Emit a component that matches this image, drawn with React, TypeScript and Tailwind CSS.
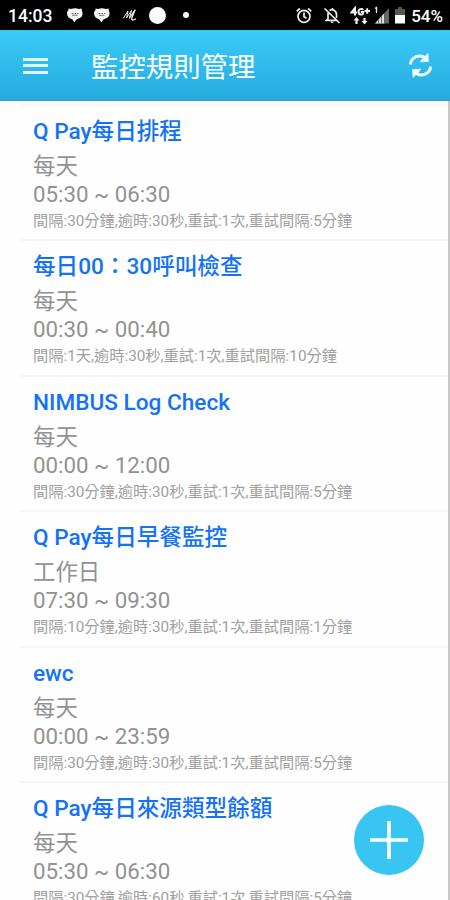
import React from "react";

type Rule = { title: string; day: string; time: string; detail: string };

const rules: Rule[] = [
  { title: "Q Pay每日排程", day: "每天", time: "05:30 ~ 06:30", detail: "間隔:30分鐘,逾時:30秒,重試:1次,重試間隔:5分鐘" },
  { title: "每日00：30呼叫檢查", day: "每天", time: "00:30 ~ 00:40", detail: "間隔:1天,逾時:30秒,重試:1次,重試間隔:10分鐘" },
  { title: "NIMBUS Log Check", day: "每天", time: "00:00 ~ 12:00", detail: "間隔:30分鐘,逾時:30秒,重試:1次,重試間隔:5分鐘" },
  { title: "Q Pay每日早餐監控", day: "工作日", time: "07:30 ~ 09:30", detail: "間隔:10分鐘,逾時:30秒,重試:1次,重試間隔:1分鐘" },
  { title: "ewc", day: "每天", time: "00:00 ~ 23:59", detail: "間隔:30分鐘,逾時:30秒,重試:1次,重試間隔:5分鐘" },
  { title: "Q Pay每日來源類型餘額", day: "每天", time: "05:30 ~ 06:30", detail: "間隔:30分鐘,逾時:60秒,重試:1次,重試間隔:5分鐘" },
];

function ChatHeart() {
  return (
    <svg className="h-[16px] w-[18px] shrink-0" viewBox="0 0 18 16">
      <path d="M2.500 1.500 5 2Q9 .5 13 2l2.500-.5.500 2.500c1.200 2.500.5 5.500-2 7l-3.500 1.500L8.300 15.500 6.500 12.500C3 11.500 1 9.500 1 6.500c0-1.500.6-2.700 1.500-3.500Z" fill="#f4f4f4" />
      <path d="M5.500 6.500h2M8.500 6.500h1.500M11 6.500h1.500M6 8.200h5.500" stroke="#666" strokeWidth=".9" />
    </svg>
  );
}

function StatusBar() {
  return (
    <div className="flex h-[30px] shrink-0 items-center bg-black text-white">
      <span className="ml-[8px] w-[58px] pt-[2px] text-[17.500px] leading-[30px] font-medium">14:03</span>
      <ChatHeart />
      <span className="w-[9px]" />
      <ChatHeart />
      <svg className="ml-[11px] h-[16px] w-[17px]" viewBox="0 0 17 16" fill="none" stroke="#eee" strokeLinecap="round" strokeLinejoin="round">
        <path d="M1.500 11 6 4 4.500 11 9.500 3.500 7.500 11" strokeWidth="1" />
        <path d="M7.500 11 13 3 9.800 11c-.5 2.500 1.500 2.500 3.700 1" strokeWidth="1.300" />
      </svg>
      <span className="ml-[10px] size-[17px] rounded-full bg-white" />
      <span className="ml-[17px] size-[6px] rounded-full bg-white" />
      <span className="flex-1" />
      <svg className="h-[18px] w-[18px]" viewBox="0 0 18 18" fill="none" stroke="#eee" strokeWidth="1.700">
        <circle cx="9" cy="10.300" r="6" />
        <path d="M9 6.500v4.200l2.600 1.600M1.700 5.300l3.200-2.900M16.300 5.300l-3.200-2.900" />
      </svg>
      <svg className="ml-[10px] h-[18px] w-[18px]" viewBox="0 0 18 18" fill="none" stroke="#eee" strokeWidth="1.700">
        <path d="M5 6.700v6L3.500 14.300h11M6.500 4.400C10 2.500 13.500 5 13.500 8.500V12M9.500 3.500V2M1.500 2.500l15 14.500" />
        <path d="M7.500 15.500h3a1.500 1.500 0 0 1-3 0Z" fill="#eee" stroke="none" />
      </svg>
      <svg className="ml-[9px] h-[19px] w-[20px]" viewBox="0 0 20 19" fill="none" stroke="#f2f2f2" strokeWidth="2">
        <path d="M5 9.500V2L1.500 6.500H7M13.200 3.800c-1-1.200-4.700-1.300-4.700 2 0 3.700 4.700 3.200 4.700 1.500V6h-2.400M14.500 5h5.500M17.200 2.200v5.600" />
        <path d="M6.500 18v-5M14.500 12v5" strokeWidth="2.200" />
        <path d="m3.500 14.500 3-3.500 3 3.500ZM11.500 15l3 3.500 3-3.500Z" fill="#f2f2f2" stroke="none" />
      </svg>
      <svg className="ml-[4px] h-[18px] w-[15px]" viewBox="0 0 15 18">
        <path d="M1 17.500 15 2v15.500Z" fill="#666" />
        <path d="M1 17.500 10.500 7v10.500Z" fill="#ddd" />
        <path d="M4.500 13v4.500M7.500 10v7.500M10.500 7v10.500" stroke="#444" strokeWidth=".7" />
        <path d="M1 2.500 2.500 1.500V7" fill="none" stroke="#eee" strokeWidth="1.300" />
      </svg>
      <svg className="mt-[1px] ml-[6px] h-[17px] w-[10px]" viewBox="0 0 10 17">
        <path d="M3 0h4v2h3v6H0V2h3Z" fill="#555" />
        <path d="M0 8h10v8.500H0Z" fill="white" />
      </svg>
      <span className="mr-[7px] ml-[6px] pt-[2px] text-[17px] leading-[30px] font-medium">54%</span>
    </div>
  );
}

function Header() {
  return (
    <header className="flex h-[71px] shrink-0 items-center border-t border-b border-t-[#28cbd8] border-b-[#479bb9] bg-linear-to-b from-[#3bcbf9] to-[#23abdd] text-white">
      <div className="ml-[23px] flex w-[25px] flex-col gap-[3.500px]">
        <span className="h-[3px] bg-[#e2f7fd]" />
        <span className="h-[3px] bg-[#e2f7fd]" />
        <span className="h-[3px] bg-[#e2f7fd]" />
      </div>
      <h1 className="ml-[43px] flex-1 pt-[4px] text-[27.400px] leading-[40px] font-normal whitespace-nowrap">監控規則管理</h1>
      <svg className="mr-[16px] h-[27px] w-[27px]" viewBox="0 0 27 27" fill="none" stroke="#edfbff" strokeWidth="3">
        <path d="M3.300 12.500C4 5.500 12 1.500 18.500 6M23.700 14.500c-.7 7-8.700 11-15.200 6.500" />
        <path d="m21 1.500.5 8-8.500.3 2.500-3ZM6 25.500l-.5-8 8.500-.3-2.500 3Z" fill="#edfbff" stroke="#edfbff" strokeWidth=".6" />
      </svg>
    </header>
  );
}

function RuleRow({ rule }: { rule: Rule }) {
  return (
    <li className="ml-[20px] h-[135.400px] shrink-0 border-t-2 border-[#f6f6f6] pt-[9px] pl-[13px] whitespace-nowrap text-[#929292]">
      <h2 className="text-[22.600px] leading-[34px] font-medium text-[#1373f4]">{rule.title}</h2>
      <p className="text-[22.400px] leading-[34px]">{rule.day}</p>
      <p className="text-[22.300px] leading-[22px]">{rule.time}</p>
      <p className="mt-[5px] text-[15.250px] leading-[22px] text-[#a0a0a0]">{rule.detail}</p>
    </li>
  );
}

export default function App() {
  return (
    <div className="relative flex h-[900px] w-[450px] flex-col overflow-hidden bg-white font-['Roboto','Noto_Sans_CJK_TC',sans-serif]">
      <StatusBar />
      <Header />
      <ul className="flex min-h-0 flex-1 flex-col overflow-hidden border-r-2 border-[#c7c7c7] bg-[#fefefe] pt-[3px]">
        {rules.map((rule) => (
          <RuleRow key={rule.title} rule={rule} />
        ))}
      </ul>
      <button aria-label="新增" className="absolute top-[805px] left-[354px] flex size-[70px] items-center justify-center rounded-full bg-[#39c5f2]">
        <svg className="size-[38px]" viewBox="0 0 38 38" stroke="white" strokeWidth="3.600">
          <path d="M19 0v38M0 19h38" />
        </svg>
      </button>
    </div>
  );
}
